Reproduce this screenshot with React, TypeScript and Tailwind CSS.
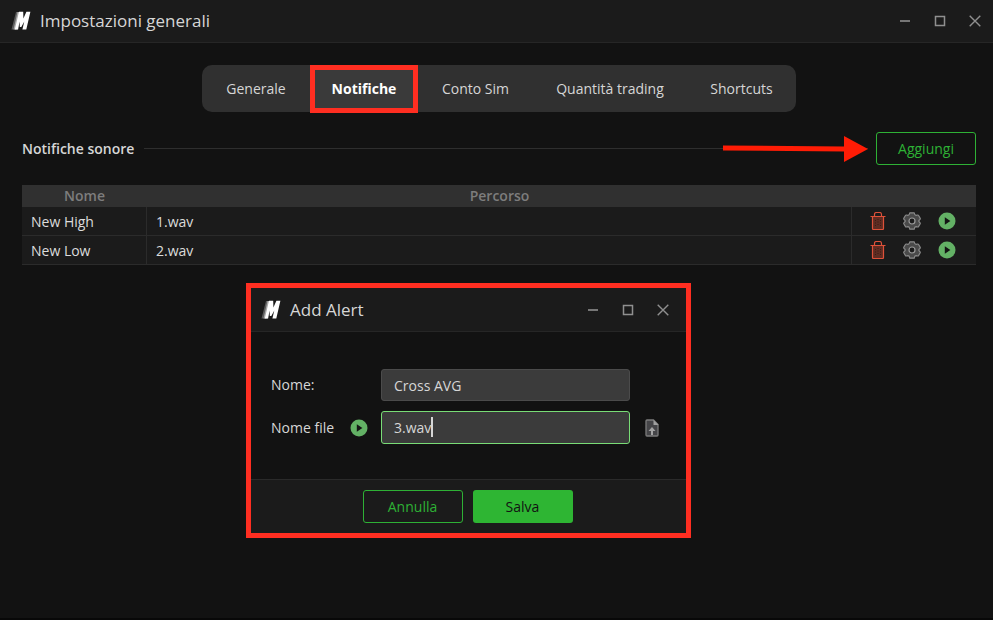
import { useState } from "react";

const tabs = [
	{ label: "Generale", width: "w-[108px]" },
	{ label: "Notifiche", width: "w-[108px]" },
	{ label: "Conto Sim", width: "w-[115px]" },
	{ label: "Quantità trading", width: "w-[154px]" },
	{ label: "Shortcuts", width: "w-[109px]" },
];

const alerts = [
	{ name: "New High", path: "1.wav" },
	{ name: "New Low", path: "2.wav" },
];

const Logo = () => (
	<svg width="20" height="20" viewBox="0 0 20 20" aria-hidden="true">
		<path d="M.5 18.500 5 1h4L5 18.500z" fill="#5c5c5c" />
		<path d="M2.500 18.500 6.500 1h4L6.500 18.500z" fill="#a8a8a8" />
		<path
			d="M3.800 18.500 8 .8h4.200l.2 6.700L15.400.8h4L15.300 18.500h-3.900l1.900-8L10.300 16H8.800l-.3-5.500-1.400 8z"
			fill="#ffffff"
		/>
	</svg>
);

const PlayIcon = () => (
	<svg width="18" height="18" viewBox="0 0 18 18" aria-hidden="true">
		<circle cx="9" cy="9" r="8.500" fill="#63b165" />
		<path d="M6.800 5.200v7.600L12.400 9z" fill="#141414" />
	</svg>
);

const TrashIcon = () => (
	<svg width="16" height="18" viewBox="0 0 16 18" fill="none" aria-hidden="true">
		<path d="M2.500 4.500h11v12a1 1 0 0 1-1 1h-9a1 1 0 0 1-1-1z" fill="#5e2c22" />
		<path
			d="M.5 4.500h15M2.500 4.500v12a1 1 0 0 0 1 1h9a1 1 0 0 0 1-1v-12M4.500 4.500v-2q0-2 2-2h3q2 0 2 2v2"
			stroke="#dd5139"
			strokeWidth="1.200"
		/>
		<path
			d="M5.500 8v7M8 7v7M10.500 8v7"
			stroke="#3b1b15"
			strokeWidth="1"
			strokeDasharray="1 1.500"
		/>
	</svg>
);

const GearIcon = () => (
	<svg width="18" height="18" viewBox="0 0 18 18" aria-hidden="true">
		<path
			d="M6.800.8h4.400q.3 2.400 1.800 2.500 2.300-.6 2.600.2l1.600 2.800q.3.800-.9 1.700-.9 1 0 2 1.200.9.900 1.700l-1.600 2.800q-.3.800-2.600.2-1.500.1-1.800 2.500H6.800Q6.500 14.800 5 14.700q-2.300.6-2.600-.2L.8 11.700q-.3-.8.9-1.700.9-1 0-2Q.5 7.100.8 6.300l1.600-2.800q.3-.8 2.600-.2Q6.500 3.200 6.800.8z"
			fill="#4a4a4a"
			stroke="#8b8b8b"
			strokeWidth="1.200"
			strokeLinejoin="round"
		/>
		<circle
			cx="9"
			cy="9"
			r="3"
			fill="#1b1b1b"
			stroke="#989898"
			strokeWidth="1.200"
		/>
	</svg>
);

const UploadIcon = () => (
	<svg width="14" height="18" viewBox="0 0 14 18" aria-hidden="true">
		<path
			d="M2 1h6.500L13 5.500V16a1 1 0 0 1-1 1H2a1 1 0 0 1-1-1V2a1 1 0 0 1 1-1z"
			fill="#454548"
			stroke="#7c7c7c"
			strokeWidth="1.300"
		/>
		<path d="M8.500 1v5H13.500z" fill="#a0a0a0" />
		<path d="M7 8l3.500 4H8v4H6v-4H3.500z" fill="#a4a4a4" />
	</svg>
);

const TitleBar = ({
	title,
	className,
}: {
	title: string;
	className: string;
}) => (
	<header
		className={`flex items-center justify-between border-b border-[#262626] bg-[#1b1b1b] ${className}`}
	>
		<div className="flex items-center gap-[9px]">
			<Logo />
			<h1 className="text-[17px] leading-6 text-[#d6d6d6]">{title}</h1>
		</div>
		<div className="flex gap-[23px]">
			<button aria-label="Riduci">
				<svg width="12" height="12" viewBox="0 0 12 12" aria-hidden="true">
					<path d="M1 6h10" stroke="#8f8f8f" strokeWidth="1.600" />
				</svg>
			</button>
			<button aria-label="Ingrandisci">
				<svg width="12" height="12" viewBox="0 0 12 12" aria-hidden="true">
					<path
						d="M1.500 1.500h9v9h-9z"
						fill="none"
						stroke="#8f8f8f"
						strokeWidth="1.500"
					/>
				</svg>
			</button>
			<button aria-label="Chiudi">
				<svg width="12" height="12" viewBox="0 0 12 12" aria-hidden="true">
					<path
						d="M.7.7l10.600 10.600M11.300.7L.7 11.300"
						stroke="#8f8f8f"
						strokeWidth="1.400"
					/>
				</svg>
			</button>
		</div>
	</header>
);

const AlertsTable = () => (
	<table className="mt-5 w-full table-fixed border-separate border-spacing-0 text-[#dcdcdc]">
		<colgroup>
			<col className="w-[125px]" />
			<col />
			<col className="w-[124px]" />
		</colgroup>
		<thead>
			<tr className="h-[22px] bg-[#303030] leading-5 text-[#7d7d7d]">
				<th className="p-0 font-semibold">Nome</th>
				<th className="p-0 font-semibold">Percorso</th>
				<td className="p-0" />
			</tr>
		</thead>
		<tbody>
			{alerts.map(({ name, path }) => (
				<tr key={name} className="h-[29px] bg-[#1b1b1b] leading-5">
					<td className="border-r border-b border-[#2b2b2b] p-0 pt-px pl-[9px]">
						{name}
					</td>
					<td className="border-r border-b border-[#2b2b2b] p-0 pt-px pl-[9px]">
						{path}
					</td>
					<td className="border-b border-[#2b2b2b] p-0">
						<div className="flex items-center gap-[17px] pl-[18px]">
							<button aria-label={`Elimina ${name}`}>
								<TrashIcon />
							</button>
							<button aria-label={`Configura ${name}`}>
								<GearIcon />
							</button>
							<button aria-label={`Riproduci ${name}`}>
								<PlayIcon />
							</button>
						</div>
					</td>
				</tr>
			))}
		</tbody>
	</table>
);

const AddAlertDialog = () => {
	const [name, setName] = useState("Cross AVG");
	const [file, setFile] = useState("3.wav");

	return (
		<div
			role="dialog"
			aria-label="Add Alert"
			className="absolute top-[283px] left-[246px] w-[445px] border-[5px] border-[#ff2e21] bg-[#121212]"
		>
			<TitleBar title="Add Alert" className="h-11 pr-[17px] pl-[10px]" />
			<div className="flex flex-col gap-[10px] pt-[37px] pb-[35px] pl-5">
				<div className="flex items-center">
					<label htmlFor="name" className="w-[110px]">
						Nome:
					</label>
					<input
						id="name"
						className="h-8 w-[249px] rounded-[3px] border border-[#4b4b4b] bg-[#3b3b3b] px-3 outline-none"
						value={name}
						onChange={(e) => setName(e.target.value)}
					/>
				</div>
				<div className="flex items-center">
					<div className="flex w-[110px] items-center justify-between pr-[13px]">
						<label htmlFor="file">Nome file</label>
						<button aria-label="Riproduci">
							<PlayIcon />
						</button>
					</div>
					<div className="relative">
						<input
							id="file"
							className="block h-[33px] w-[249px] rounded-[3px] border border-[#79dc76] bg-[#3b3b3b] px-3 outline-none"
							value={file}
							onChange={(e) => setFile(e.target.value)}
						/>
						<span className="absolute top-[6px] left-[50px] h-5 w-[2px] bg-[#d6d6d6]" />
					</div>
					<button aria-label="Carica file" className="ml-[15px]">
						<UploadIcon />
					</button>
				</div>
			</div>
			<footer className="flex h-[54px] justify-center gap-[10px] border-t border-[#2a2a2a] bg-[#1b1b1b] pt-[10px] pr-[2px]">
				<button className="h-[33px] w-[100px] rounded-[3px] border border-[#2eb135] text-[#2eb135]">
					Annulla
				</button>
				<button className="h-[33px] w-[100px] rounded-[3px] bg-[#2eb533] text-[#121212]">
					Salva
				</button>
			</footer>
		</div>
	);
};

const App = () => {
	const [active, setActive] = useState("Notifiche");

	return (
		<div className="relative min-h-screen border-b-2 border-[#080808] bg-[#121212] font-['Open_Sans',sans-serif] text-[14px] leading-5 text-[#d6d6d6]">
			<TitleBar
				title="Impostazioni generali"
				className="h-[43px] pr-3 pl-[11px]"
			/>
			<main className="pt-[22px] pr-[17px] pl-[22px]">
				<nav className="mx-auto flex h-[47px] w-fit rounded-[10px] bg-[#303030]">
					{tabs.map(({ label, width }) => (
						<button
							key={label}
							onClick={() => setActive(label)}
							className={`${width} ${
								active === label
									? "h-12 border-[5px] border-[#ff2e21] bg-[#3a3a3a] font-bold text-white"
									: ""
							}`}
						>
							{label}
						</button>
					))}
				</nav>
				<div className="mt-5 flex items-center">
					<h2 className="font-semibold">Notifiche sonore</h2>
					<div className="relative mr-2 ml-[10px] flex-1 border-t border-[#2e2e2e]">
						<svg
							className="absolute -top-[13px] right-0"
							width="146"
							height="26"
							viewBox="0 0 146 26"
							aria-hidden="true"
						>
							<path
								d="M1 9.500l121 1V0l24 13-24 13V15.500L1 14.500z"
								fill="#ff1c05"
							/>
						</svg>
					</div>
					<button className="h-[33px] w-[100px] rounded-[3px] border border-[#2eb135] text-[#2eb135]">
						Aggiungi
					</button>
				</div>
				<AlertsTable />
			</main>
			<AddAlertDialog />
		</div>
	);
};

export default App;
